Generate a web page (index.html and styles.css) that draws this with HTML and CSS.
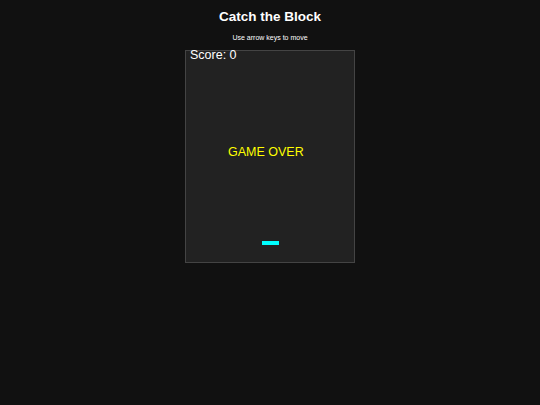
FILE: index.html
```html
<!DOCTYPE html>
<html>
<head>
<meta charset="utf-8">
<link rel="stylesheet" href="styles.css">
</head>
<body>
<div class="page">
  <h1 class="title">Catch the Block</h1>
  <p class="hint">Use arrow keys to move</p>
  <div class="board">
    <div class="score">Score: 0</div>
    <div class="over">GAME OVER</div>
    <div class="paddle"></div>
  </div>
</div>
</body>
</html>
```
FILE: styles.css
```css
html, body {
  margin: 0;
  padding: 0;
  background: #111111;
  height: 100%;
}
.page {
  display: flex;
  flex-direction: column;
  align-items: center;
  font-family: "Liberation Sans", Arial, sans-serif;
  color: #ffffff;
}
.title {
  margin: 9px 0 0 0;
  font-size: 13.5px;
  line-height: 16px;
  font-weight: bold;
}
.hint {
  margin: 9px 0 0 0;
  font-size: 7px;
  line-height: 8px;
}
.board {
  position: relative;
  margin-top: 8px;
  width: 168px;
  height: 211px;
  background: #222222;
  border: 1px solid #444444;
}
.score {
  position: absolute;
  left: 4px;
  top: -3px;
  font-size: 12.5px;
  line-height: 14px;
  color: #ffffff;
}
.over {
  position: absolute;
  left: 42px;
  top: 94px;
  font-size: 12.5px;
  line-height: 14px;
  color: #ffff00;
}
.paddle {
  position: absolute;
  left: 76px;
  top: 190px;
  width: 17px;
  height: 4px;
  background: #00ffff;
}
```
